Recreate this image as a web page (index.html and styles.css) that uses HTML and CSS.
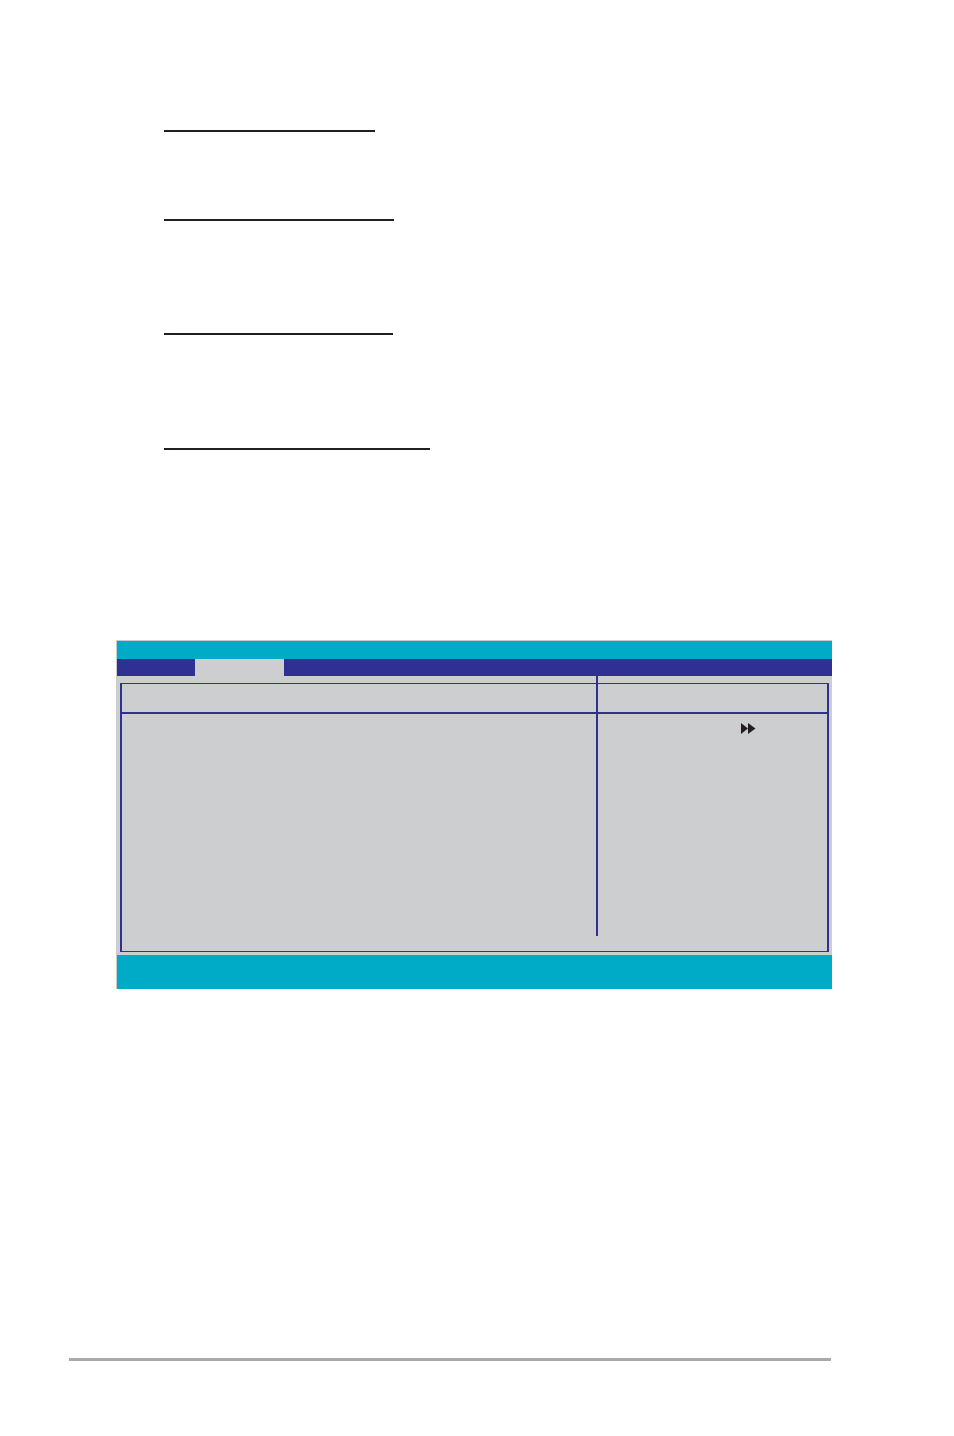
FILE: index.html
```html
<!DOCTYPE html>
<html lang="en">
<head>
    <meta charset="UTF-8">
    <meta name="viewport" content="width=device-width, initial-scale=1.0">
    <title>BIOS Setup</title>
    <link rel="stylesheet" href="styles.css">
</head>
<body>
    <div class="page">
        <!-- section headings (underlines only) -->
        <div class="rule rule-1"></div>
        <div class="rule rule-2"></div>
        <div class="rule rule-3"></div>
        <div class="rule rule-4"></div>

        <div class="bios">
            <div class="bios-title"></div>
            <div class="bios-menu">
                <div class="menu-item"></div>
                <div class="menu-item active"></div>
                <div class="menu-rest"></div>
            </div>
            <div class="bios-body">
                <div class="frame">
                    <div class="col col-main">
                        <div class="col-head"></div>
                    </div>
                    <div class="divider"></div>
                    <div class="col col-help">
                        <div class="col-head"></div>
                        <div class="help-body">
                            <svg class="arrow" width="15" height="11" viewBox="0 0 15 11">
                                <polygon points="0,0 7,5.5 0,11" />
                                <polygon points="7,0 14.5,5.5 7,11" />
                            </svg>
                        </div>
                    </div>
                </div>
            </div>
            <div class="bios-footer"></div>
        </div>

        <div class="page-rule"></div>
    </div>
</body>
</html>
```

FILE: styles.css
```css
body {
    margin: 0;
    background: #fff;
    font-family: "Liberation Sans", Arial, sans-serif;
}
.page {
    display: flex;
    flex-direction: column;
    align-items: flex-start;
    width: 954px;
    min-height: 1436px;
}
.rule {
    height: 2px;
    background: #231f20;
    margin-left: 164px;
}
.rule-1 {
    width: 211px;
    margin-top: 130px;
}
.rule-2 {
    width: 230px;
    margin-top: 87px;
}
.rule-3 {
    width: 229px;
    margin-top: 112px;
}
.rule-4 {
    width: 266px;
    margin-top: 113px;
}

/* BIOS screen */
.bios {
    width: 715px;
    margin-top: 190px;
    margin-left: 116px;
    border-top: 1px solid #c9cacc;
    border-left: 1px solid #c9cacc;
    background: #cdced0;
}
.bios-title {
    height: 18px;
    background: #00abc7;
}
.bios-menu {
    display: flex;
    height: 17px;
    background: #2e3192;
}
.menu-item {
    width: 78px;
}
.menu-item.active {
    width: 89px;
    background: #cdced0;
}
.menu-rest {
    flex: 1;
}
.bios-body {
    padding: 7px 3px 3px 3px;
}
.frame {
    display: flex;
    height: 267px;
    border: 1px solid #2e3192;
    border-left-width: 2px;
    border-right-width: 2px;
}
.col-main {
    width: 474px;
}
.col-help {
    flex: 1;
}
.col-head {
    height: 28px;
    border-bottom: 2px solid #2e3192;
}
.divider {
    width: 2px;
    margin-top: -8px;
    margin-bottom: 15px;
    background: #2e3192;
}
.help-body {
    padding: 9px 0 0 143px;
}
.arrow {
    display: block;
    fill: #231f20;
}
.bios-footer {
    height: 34px;
    background: #00abc7;
}

.page-rule {
    width: 762px;
    height: 3px;
    margin-top: 369px;
    margin-left: 69px;
    background: #a7a9ac;
}
```
